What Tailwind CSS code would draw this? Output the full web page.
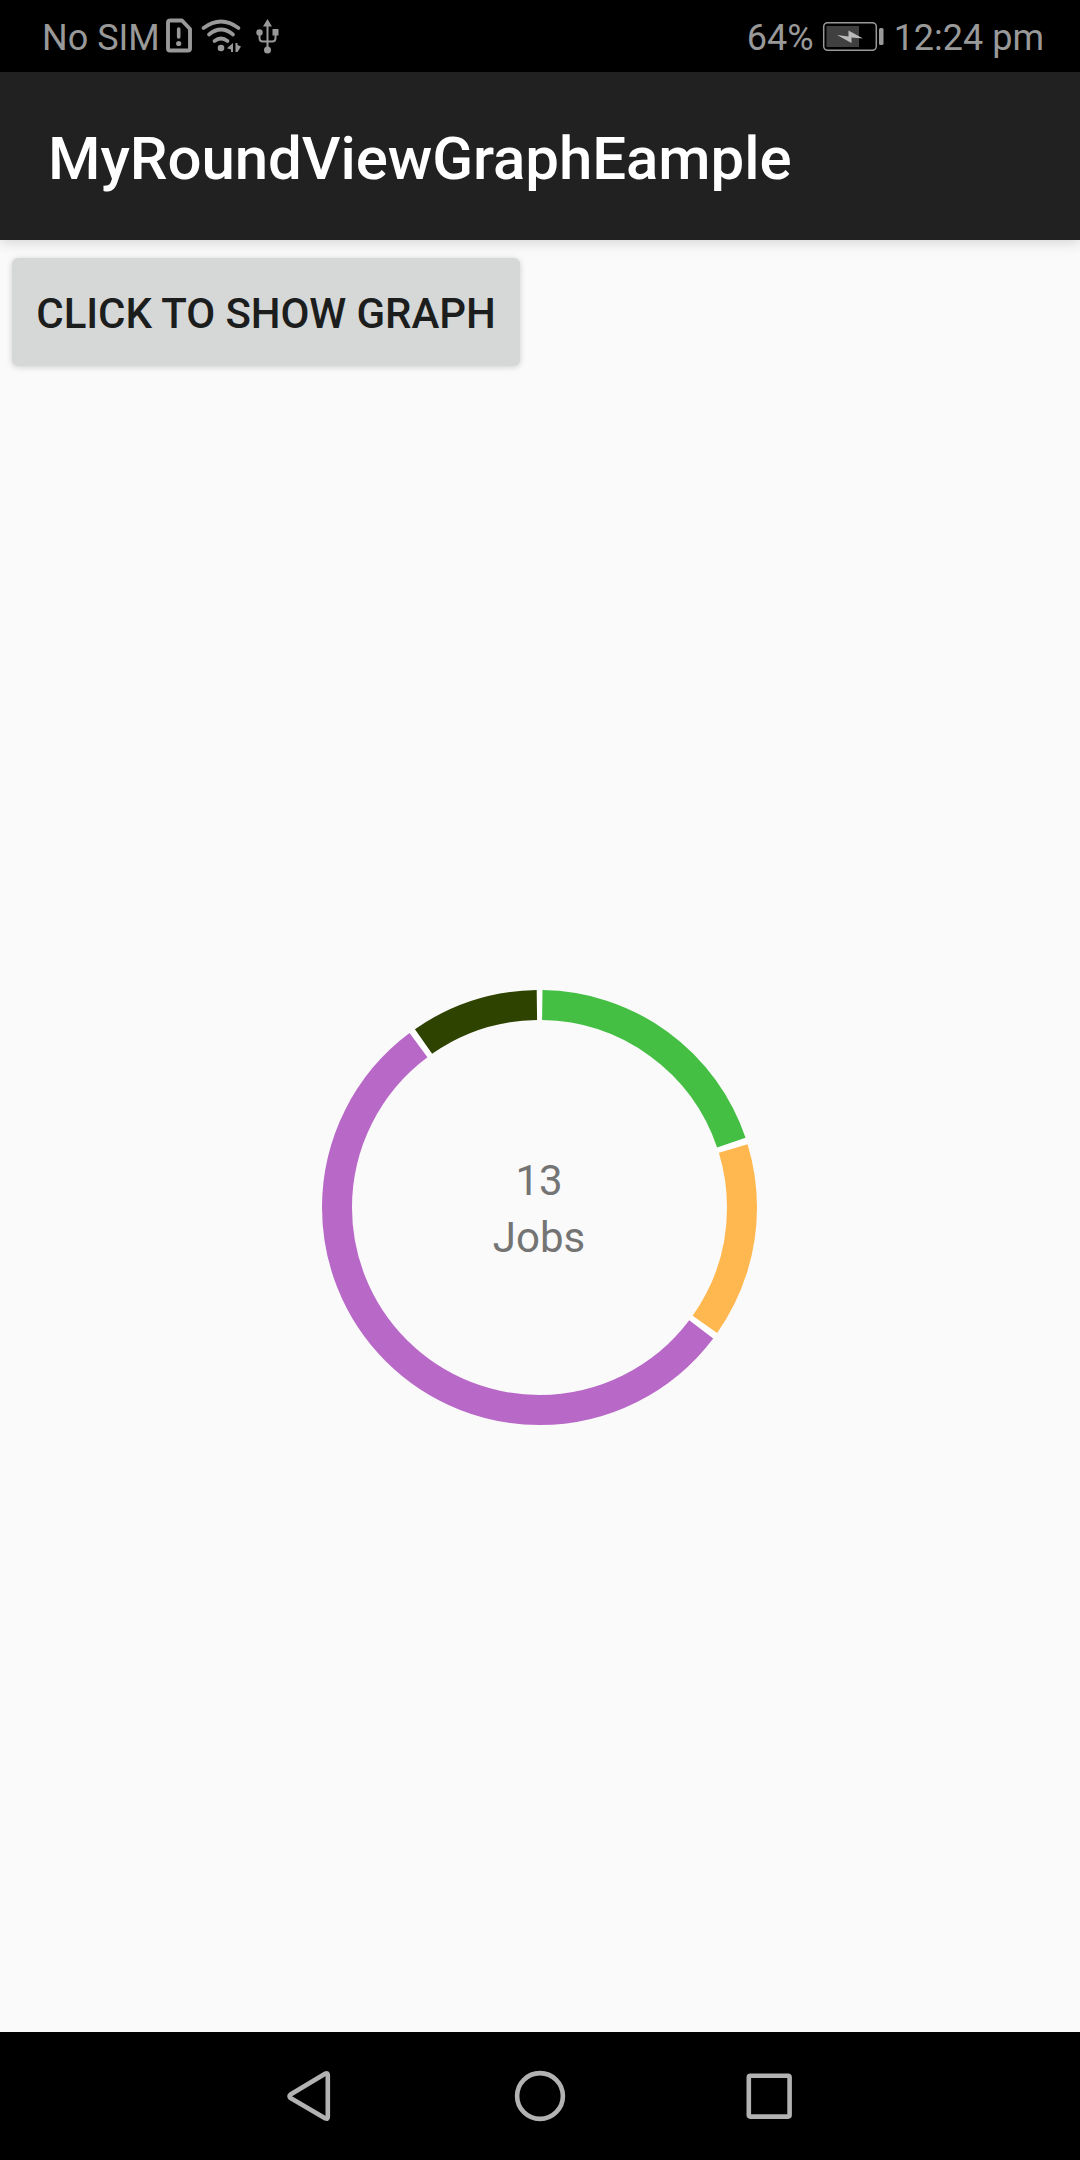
<!DOCTYPE html>
<html lang="en">
<head>
<meta charset="utf-8">
<title>MyRoundViewGraphEample</title>
<script src="https://cdn.jsdelivr.net/npm/@tailwindcss/browser@4"></script>
</head>
<body class="bg-[#fafafa] font-['Roboto',sans-serif]">
<div class="flex h-[2160px] w-[1080px] flex-col overflow-hidden">
  <!-- Status bar -->
  <div class="flex h-[72px] shrink-0 items-start justify-between bg-black pr-[36px] pl-[42px] text-[36px] leading-[77px] text-[#999]">
    <div class="flex">
      <span class="w-[118px] whitespace-nowrap">No SIM</span>
      <svg class="h-[72px] w-[130px]" viewBox="160 0 130 72" fill="none" stroke="#999">
        <path d="M170.500 20.500H182L190 29V48.500Q190 50.500 188 50.500H170Q168 50.500 168 48.500V22.500Q168 20.500 170.500 20.500Z" stroke-width="3.900" stroke-linejoin="round"/>
        <path d="M178.700 29V37" stroke-width="3.600" stroke-linecap="round"/>
        <circle cx="178.700" cy="43.500" r="2.600" fill="#999" stroke="none"/>
        <path d="M203.500 28Q221 15 238.500 28M209 34.500Q221 24.500 233 34.500M214.500 41Q221 36 227.500 41" stroke-width="3.700" stroke-linecap="round"/>
        <g fill="#999" stroke="none">
          <circle cx="221" cy="48" r="3.300"/>
          <path d="M233 43V52H231V49.500L227 48.300ZM235.500 43H237.500V45L241 46.500L237.500 52H235.500Z"/>
          <path d="M267.500 19L272 26.500H263Z"/>
          <circle cx="259.500" cy="32.500" r="3.200"/>
          <path d="M272.500 29H278.500V35.500H272.500Z"/>
          <circle cx="267.500" cy="50" r="3.500"/>
        </g>
        <path d="M267.500 25V49M259.500 34V38Q259.500 41.500 263 41.500H272Q275.500 41.500 275.500 38V34" stroke-width="2"/>
      </svg>
    </div>
    <div class="flex">
      <span>64%</span>
      <svg class="h-[72px] w-[80px]" viewBox="814 0 80 72">
        <rect x="823.700" y="22.700" width="52.600" height="27.600" rx="4" fill="none" stroke="#999" stroke-width="1.500"/>
        <path d="M826.500 26H859V47H826.500Z" fill="#404040"/>
        <path d="M837 35L848.500 36.500V30.500L863 38.500L851.500 37.500V43Z" fill="#bbb"/>
        <rect x="879" y="28" width="4.500" height="17" rx="1.500" fill="#999"/>
      </svg>
      <span>12:24 pm</span>
    </div>
  </div>
  <!-- App bar -->
  <header class="z-10 flex h-[168px] shrink-0 items-center bg-[#212121] px-[48px] pt-[5px] shadow-[0_3px_12px_rgba(0,0,0,0.15)]">
    <h1 class="text-[60px] leading-none font-medium tracking-[-0.07px] text-white">MyRoundViewGraphEample</h1>
  </header>
  <!-- Content -->
  <main class="flex min-h-0 flex-1 flex-col items-start px-[12px] pt-[18px]">
    <button class="flex h-[108px] w-[508px] shrink-0 items-center justify-center rounded-[6px] bg-[#d6d7d7] pt-[4px] text-[42px] leading-none font-medium tracking-[-0.08px] whitespace-nowrap text-[#1c1d1d] shadow-[0_1px_6px_rgba(0,0,0,0.18)]">CLICK TO SHOW GRAPH</button>
    <div class="mt-[624px] ml-[310px] grid h-[435px] w-[435px] place-items-center">
      <svg class="col-start-1 row-start-1 h-[435px] w-[435px]" viewBox="-217.500 -217.500 435 435">
        <g fill="none" stroke-width="30" transform="rotate(-90)">
          <circle r="202.500" stroke="#fff"/>
          <circle r="202.500" stroke="#44bf43" pathLength="360" stroke-dasharray="70.500 289.500" stroke-dashoffset="-0.800"/>
          <circle r="202.500" stroke="#ffb74f" pathLength="360" stroke-dasharray="52.200 307.800" stroke-dashoffset="-73.050"/>
          <circle r="202.500" stroke="#b868c7" pathLength="360" stroke-dasharray="196.300 163.700" stroke-dashoffset="-127"/>
          <circle r="202.500" stroke="#2f4300" pathLength="360" stroke-dasharray="34.200 325.800" stroke-dashoffset="-325.050"/>
        </g>
      </svg>
      <p class="col-start-1 row-start-1 pt-[3px] pr-px text-center text-[42px] leading-[57px] text-[#747474]">13<br>Jobs</p>
    </div>
  </main>
  <!-- Navigation bar -->
  <nav class="flex h-[128px] shrink-0 justify-center bg-black">
    <svg class="h-[128px] w-[560px]" viewBox="260 2032 560 128" fill="none" stroke="#b2b2b2" stroke-width="4.600" stroke-linejoin="round">
      <path d="M325.500 2073.500Q327.800 2072.500 327.800 2075V2117Q327.800 2119.500 325.500 2118.500L290.500 2098Q288.500 2096 290.500 2094.500Z"/>
      <circle cx="540" cy="2096" r="22.900"/>
      <rect x="748.800" y="2075.800" width="40.800" height="40.800" rx="1.500"/>
    </svg>
  </nav>
</div>
</body>
</html>
